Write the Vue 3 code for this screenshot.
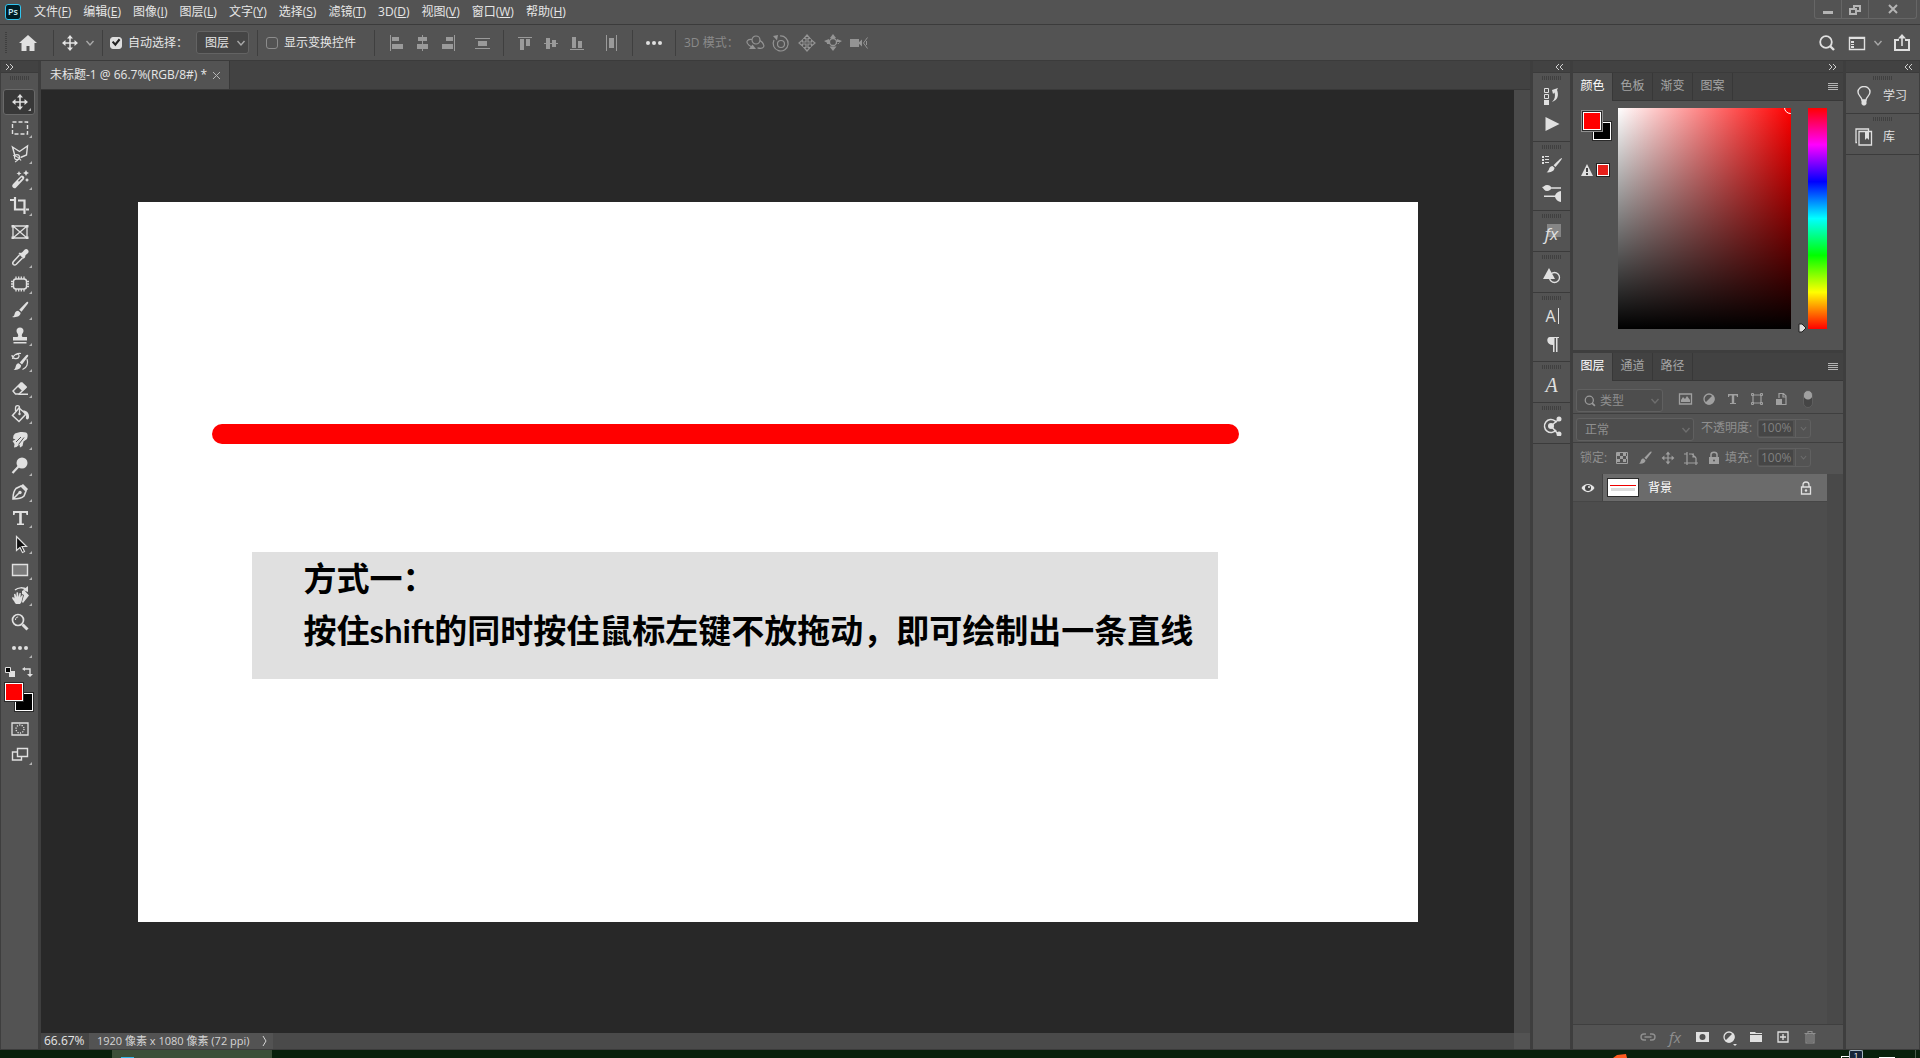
<script setup>
import { ref } from 'vue'

const menus = [
  ['文件', 'F'], ['编辑', 'E'], ['图像', 'I'], ['图层', 'L'], ['文字', 'Y'], ['选择', 'S'],
  ['滤镜', 'T'], ['3D', 'D'], ['视图', 'V'], ['窗口', 'W'], ['帮助', 'H'],
]

const S = 'fill="none" stroke="currentColor"'
const moveArrows = `<path ${S} stroke-width="1.5" d="M10 4v12M4 10h12"/><path d="M10 2l3 3.5H7zM10 18l3-3.5H7zM2 10l3.500-3v6zM18 10l-3.500-3v6z"/>`
const brushShape = '<path d="M18 2c.6.5.2 1.200-.2 1.800l-6.300 8-2.300-2 7-7.300c.6-.6 1.200-1 1.800-.5zM8.200 10.700l2.400 2.100c0 3.200-3.600 5-8.600 4.200 2.600-1 2.300-2.400 3-4.200.6-1.400 1.900-2.200 3.200-2.100z"/>'

const icons = {
  home: '<path d="M10 2l9 8h-2.500v8h-5v-5h-3v5h-5v-8H1z"/>',
  move: moveArrows,
  alignL: `<path ${S} d="M4.500 2v16"/><path d="M6 4h7v4H6zM6 11h11v5H6z"/>`,
  alignC: `<path ${S} d="M10.500 2v16"/><path d="M6 4h9v4H6zM5 11h11v5H5z"/>`,
  alignR: `<path ${S} d="M16.500 2v16"/><path d="M8 4h7v4H8zM4 11h11v5H4z"/>`,
  distV: `<path ${S} d="M3 5.500h15M3 15.500h15"/><path d="M6 8h9v5H6z"/>`,
  alignT: `<path ${S} d="M3 4.500h14"/><path d="M5 6h4v11H5zM11 6h4v7h-4z"/>`,
  alignM: `<path ${S} d="M3 10.500h14"/><path d="M5 5h4v11H5zM11 7h4v7h-4z"/>`,
  alignB: `<path ${S} d="M3 16.500h14"/><path d="M5 4h4v11H5zM11 8h4v7h-4z"/>`,
  distH: `<path ${S} d="M5.500 2v16M15.500 2v16"/><path d="M8 5h5v10H8z"/>`,
  dots: '<circle cx="4" cy="10" r="2"/><circle cx="10" cy="10" r="2"/><circle cx="16" cy="10" r="2"/>',
  orbit: `<circle cx="11" cy="7" r="4" ${S} stroke-width="1.200"/><path ${S} stroke-width="1.200" d="M7 6.500C3 6 1 8 2.500 10.500c1 1.500 2.500 2.500 4 3.200M15 7.500c3 2 4.500 4.500 3.500 6.500-1 1.500-3.500 1.500-6 .8"/><path d="M4 16l3.500-4.500L11 16z"/>`,
  roll: `<circle cx="10" cy="11" r="3.500" ${S} stroke-width="1.200"/><path ${S} stroke-width="1.200" d="M9 3a7.500 7.500 0 1 1-6 4"/><path d="M2 3l5-1-1 5.500z"/>`,
  pan3d: `<path ${S} stroke-width="1.200" d="M10 2l3 3.500h-2V9h3.500V7l3.500 3-3.500 3v-2H11v3.500h2L10 18l-3-3.500h2V11H5.500v2L2 10l3.500-3v2H9V5.500H7z"/>`,
  slide3d: `<circle cx="10" cy="9" r="3.500" ${S} stroke-width="1.300"/><path d="M10 1l3 4H7zM10 18l3.500-4.500h-7zM1 8l5-2v5zM19 8l-5-2v5zM4 9h3v2H4zM13 9h3v2h-3z"/>`,
  cam3d: `<path d="M1 6h9v8H1zM9 10l4-3.500v7z"/><path ${S} d="M18.500 4.500L14.500 10l4 5.500M17.500 8v4"/>`,
  search: `<circle cx="9" cy="9" r="5.800" ${S} stroke-width="1.800"/><path ${S} stroke-width="2.400" d="M13 13l4 4"/>`,
  layout: `<path ${S} stroke-width="1.400" d="M2.500 4.500h15v12h-15z"/><path d="M2 4h16v2H2zM4 8h3v2H4zM4 11h3v1H4zM4 13h3v2H4z"/>`,
  share: `<path ${S} stroke-width="2" d="M7 7H3v10h14V7h-4"/><path ${S} stroke-width="1.600" d="M10 13V4"/><path d="M10 1l4 4.500H6z"/>`,
  marquee: `<path ${S} stroke-width="1.400" stroke-dasharray="4 2" d="M2.500 4h15v12h-15z"/>`,
  lasso: `<path ${S} stroke-width="1.400" d="M5 12L2.500 3l7 4.500L17.500 2l-1 9-6 2.500"/><circle cx="7" cy="13.200" r="2.500" ${S} stroke-width="1.200"/><path ${S} stroke-width="1.200" d="M3 11.500c3 .5 6 2 8 5M8 15c-.5 1.500-1.500 2.500-3 3"/>`,
  wand: `<path ${S} stroke-width="4.600" stroke-linecap="round" d="M4.500 15.800L12 8"/><path stroke="#535353" stroke-width="1.300" d="M8.500 11.200L12 7.700"/><path d="M9 1l.8 1.700 1.700.8-1.700.8L9 6l-.8-1.700-1.700-.8 1.700-.8zM16 0l1 2 2 1-2 1-1 2-1-2-2-1 2-1zM17 8l.8 1.200L19 10l-1.200.8L17 12l-.8-1.200L15 10l1.200-.8z"/>`,
  crop: `<path ${S} stroke-width="2.200" d="M0 4h4M5 1v12.500h10M8 4.500h6.500V18M16 13.500h3"/>`,
  frame: `<path ${S} stroke-width="1.300" d="M3 4h14v12H3zM3 4l14 12M17 4L3 16"/><path d="M1.500 3h2.500v2.500H1.500zM16 3h2.500v2.500H16zM1.500 14.500h2.500V17H1.500zM16 14.500h2.500V17H16z"/>`,
  dropper: `<path d="M11 5l1.500-1 2-2.200c1-1 2.700-.9 3.500.2.900 1 .8 2.300-.2 3.200l-2.300 2L15 9.500l-1.500 1.200-5-5L9.700 4.500z"/><path ${S} stroke-width="1.500" d="M9.500 7L3.500 13.500c-1 1.200-.9 2.300-.2 3 .9.800 2 .7 3-.2L12.500 10"/>`,
  patch: `<rect x="3.500" y="5" width="13" height="10" rx="2.500" ${S} stroke-width="1.400"/><path ${S} stroke-width="1.300" d="M6 2.500V5M8.700 2.500V5M11.300 2.500V5M14 2.500V5M6 15v2.500M8.700 15v2.500M11.300 15v2.500M14 15v2.500M1 7.500h3M1 10h3M1 12.500h3M16 7.500h3M16 10h3M16 12.500h3"/>`,
  brush: brushShape,
  stamp: '<path d="M10 1.500c2.200 0 3.500 1.500 3.500 3.500 0 1.800-1.700 2.500-1.700 4.500 0 1.200.6 1.500 2 1.500H17v3.500H3V11h3.200c1.400 0 2-.3 2-1.500 0-2-1.700-2.700-1.700-4.500 0-2 1.300-3.500 3.500-3.500zM3.500 16h13v1.500h-13z"/>',
  history: `<path ${S} stroke-width="1.200" d="M2 3c0 4 6 5 7 1.500C9.500 2 7 1.500 6 3M2.500 7C3 3 7 1 11 1.500M17 7c1.500 4 0 9-4.500 10.500"/><path d="M18 3c.6.5.2 1.200-.2 1.800L12 12.500l-2.300-2 6.500-7.200c.6-.6 1.200-.8 1.800-.3zM8.700 11.200l2.400 2.100c0 3-2.600 5-7.600 4.500 2.100-1 1.800-2.500 2.500-4.300.6-1.500 1.500-2.300 2.700-2.300z"/>`,
  eraser: `<path ${S} stroke-width="1.400" d="M3 13L11 5l5 4.500-7 6.500H5.500z"/><path d="M7.500 8.500L12 4l5 4.800-4.500 4.500zM9 15.500h9V17H8z"/>`,
  bucket: `<path ${S} stroke-width="1.500" d="M9 4L2.500 11.500l6.500 6L16 10z"/><path ${S} stroke-width="1.300" d="M9.500 10V3.500C9.500 1 5.500 1 5.500 4v3"/><circle cx="9.500" cy="10" r="1.200"/><path d="M13 6.500c4 0 6 2.500 6 6.500 0 1.500-.7 2.500-1.700 2.500S15.500 14.500 16 13c.5-1.500 0-2-1-2z"/>`,
  smudge: '<path d="M5 3.500C8 2 13 1.500 16 2.500c2 .8 2 4 1 6.500l-3.500 2.500-1 4.500-2.500 1.500-.5-3-3 2.500-2.500.5.500-3.500L2.500 11l3-1.500L3 8.500l.5-3z"/><path d="M8.500 14.500l5.500-7M6 12l5-5" stroke="#535353"/>',
  dodge: `<circle cx="12" cy="7" r="5.500"/><path ${S} stroke-width="2.200" d="M8.500 10.500L2.500 17"/>`,
  pen: `<path ${S} stroke-width="1.600" d="M3 17c0-4 .5-8 3-10.500L11 4l5 5-2 5c-2.500 2.500-7 3-11 3zM3 17l6-6"/><circle cx="10" cy="10.500" r="1.700"/><path d="M11 3.500l2-1.500 5 5-1.500 2z"/>`,
  type: '<path d="M3 3h15v4h-1.500L16 5h-4.200v10.500H14V17H7v-1.500h2.200V5H5l-.5 2H3z"/>',
  select: '<path d="M6.500 2.500v14l3.500-3 2.500 5 2-1-2.500-5h4.500z" fill="#111" stroke="#e0e0e0" stroke-width="1.200"/>',
  rect: '<path d="M2.500 4.500h15v11h-15z" fill="#7b7b7b" stroke="#e0e0e0" stroke-width="1.400"/>',
  hand: `<path d="M5 17c-1-2.500-3-4-3-5.500 1-.5 2 .2 2.500 1L4 8l1.300-.3L6.500 11V6.500L8 6.300 8.500 11l1-4h1.300l-.3 4.500L12 9l1 .5-1 4c-.3 2-1 3.500-2 4.500H6z"/><path d="M12 5l2-1 5 5.500-6 7.500-1-1 2-7-2-1z"/><path ${S} stroke-width="1.500" d="M5 4c3-2.500 8-3 12-.5"/><path d="M18 0v6l-5-2z"/>`,
  zoom: `<circle cx="8" cy="8" r="5.500" ${S} stroke-width="1.700"/><path ${S} stroke-width="1" d="M5.500 8c0-2 1-3 2.700-3"/><path ${S} stroke-width="3" d="M12.500 12.500l5 5"/>`,
  mask: `<path ${S} stroke-width="1.300" d="M2 4h16v12H2z"/><circle cx="10" cy="10" r="4" ${S} stroke-width="1.300" stroke-dasharray="1.200 1.300"/>`,
  screen: `<path ${S} stroke-width="1.400" d="M7.500 3.500h10v8h-10zM7 7H2.500v8h9v-3"/>`,
  history2: `<path ${S} d="M2.500 2.500h4v4h-4zM2.500 8.500h4v4h-4z"/><path d="M2 14h5v5H2zM10 4l6-2-1 2c2 5 1 10-5 12 3-3 3.500-6 2.500-9.500L11 8z"/>`,
  play: '<path d="M3.500 3l14 7-14 7z"/>',
  brushes: '<path d="M0 1h2v2H0zM0 4h2v2H0zM0 7h2v2H0zM3 1h4v1H3zM3 4h4v1H3zM3 7h4v1H3z"/><path d="M20 3c.5.5-4 6.500-6.500 9l-2-1.800C14.500 7.500 19.300 2.400 20 3zM10.500 11l2 1.800c0 3-3 5-8 4.500 2-1 2-2.200 2.700-3.800.6-1.500 1.800-2.500 3.300-2.500z"/>',
  brushset: `<path d="M0 4c2 0 2.500-2 5-2s4 1.500 4 2.300h10v1.500H9C9 6.500 7.500 8 5 8S2 6 0 4zM2 12.500h11c1-2.500 3-4 6-4.500v11c-3-.5-5-2-6-5H2z"/>`,
  shapes: `<path d="M7 3l6 11H1z"/><circle cx="12.500" cy="12.500" r="5" ${S} stroke-width="1.300"/>`,
  para: `<path d="M8 3h9v1h-1.500v14H14V4h-1.500v14H11v-7C4 11 4 3 8 3z"/>`,
  nodes: `<circle cx="9" cy="10" r="6.500" ${S} stroke-width="1.500" stroke-dasharray="32 9" transform="rotate(38 9 10)"/><circle cx="9" cy="10" r="3"/><path ${S} stroke-width="1.500" d="M9 10l7-6M9 10l7 8"/><circle cx="17" cy="3" r="2.500"/><circle cx="17" cy="18" r="2.500"/>`,
  bulb: `<path ${S} stroke-width="1.400" d="M8 14c0-3-4-4-4-8 0-3.500 3-5.500 6-5.500S16 2.500 16 6c0 4-4 5-4 8z"/><path d="M7.500 14h5v4l-1.500 1.500H9L7.500 18z"/>`,
  library: `<path ${S} stroke-width="1.300" d="M5 4.500h12.500V18H5zM3 15.500H2V2h12.500v2"/><path d="M11 5h4v8l-2-2-2 2z"/>`,
  image: `<path ${S} stroke-width="1.300" d="M4.500 5h12v10h-12z"/><path d="M6 13v-2l2-3 2 2 2-3 3 4v2z"/>`,
  adjust: `<circle cx="10" cy="10" r="5" ${S} stroke-width="1.300"/><path d="M14 6A5.600 5.600 0 0 1 6 14z"/>`,
  tsmall: '<path d="M5 5h10v3h-1l-.5-1.500h-2.300V14H13v1H7v-1h1.800V6.500H6.500L6 8H5z"/>',
  transform: `<path ${S} stroke-width="1.200" d="M6 6h8v8H6z"/><path ${S} d="M4.500 4.500h2v2h-2zM13.500 4.500h2v2h-2zM4.500 13.500h2v2h-2zM13.500 13.500h2v2h-2z"/>`,
  smart: `<path ${S} stroke-width="1.200" d="M8 9V4.500h4.500L15 7v8.500h-4M12 5v3h3"/><path d="M5 10h6v6H5z"/>`,
  checker: `<path ${S} d="M4.500 4.500h11v11h-11z"/><path d="M5 5h3v3H5zM11 5h3v3h-3zM8 8h3v3H8zM5 11h3v3H5zM11 11h3v3h-3zM14 8h1v3h-1z"/>`,
  cropSmall: `<path ${S} stroke-width="1.200" d="M3 6h3M6 4v11h9M13 6H8M17 15h-2v2M11 6l4 4v5M6 15v2M12 6v3h3M3 15h3"/>`,
  lock: `<path d="M5 9h10v7H5z"/><path ${S} stroke-width="1.500" d="M7 9V6.500c0-3 6-3 6 0V9"/><circle cx="10" cy="12.500" r="1" fill="#535353"/>`,
  lockLine: `<path ${S} stroke-width="1.300" d="M5.500 9h9v7h-9zM7 9V7c0-4 6-4 6 0v2"/><circle cx="10" cy="12.500" r="1.200"/>`,
  eye: '<path d="M3.500 10c3-5.500 10-5.500 13 0-3 5.500-10 5.500-13 0z"/><circle cx="10" cy="10" r="3" fill="#444"/><circle cx="11" cy="9" r="1"/>',
  link: `<path ${S} stroke-width="1.400" d="M8 13H6c-4 0-4-6 0-6h2M12 7h2c4 0 4 6 0 6h-2M6.500 10h7"/>`,
  addMask: '<path fill-rule="evenodd" d="M4 5h13v10H4zM10.500 7a3 3 0 1 0 0 6 3 3 0 1 0 0-6z"/>',
  folder: '<path d="M4 5h5l1 1h6v1H4zM4 8h12v7H4z"/>',
  plus: `<path ${S} stroke-width="1.300" d="M5 5h10v10H5zM10 7v6M7 10h6"/>`,
  trash: `<path ${S} stroke-width="1.100" d="M6 7h8v9H6zM8 8v7M10 8v7M12 8v7M4.500 6.500h11M8 6V4.500h4V6"/>`,
  dropV: `<path ${S} stroke-width="1.400" d="M6.500 8l3.500 4 3.500-4"/>`,
}

const alignA = ['alignL', 'alignC', 'alignR']
const alignB = ['alignT', 'alignM', 'alignB']
const modes3d = ['orbit', 'roll', 'pan3d', 'slide3d', 'cam3d']
const tools = [
  'move', 'marquee', 'lasso', 'wand', 'crop', 'frame', 'dropper', 'patch', 'brush', 'stamp', 'history',
  'eraser', 'bucket', 'smudge', 'dodge', 'pen', 'type', 'select', 'rect', 'hand', 'zoom', 'dots',
]
const noFlyout = ['frame', 'zoom']
const dock = [['history2', 'play'], ['brushes', 'brushset'], ['fx'], ['shapes'], ['char', 'para'], ['glyph'], ['nodes']]
const filters = ['image', 'adjust', 'tsmall', 'transform', 'smart']
const locks = ['checker', 'brush', 'move', 'cropSmall', 'lock']

const activeTool = ref('move')
const autoSelect = ref(true)
const showTransform = ref(false)
</script>

<template>
  <div class="app">
    <header class="menubar">
      <span class="logo">Ps</span>
      <nav>
        <button v-for="[name, key] in menus" :key="name" type="button">{{ name }}(<u>{{ key }}</u>)</button>
      </nav>
      <div class="winctl">
        <button type="button" aria-label="最小化"><svg width="20" height="18"><path d="M5 11h10v3H5z" /></svg></button>
        <button type="button" aria-label="还原"><svg width="20" height="18"><path fill="none" stroke="currentColor" stroke-width="2" d="M9 10V6h6v5h-3M5 9h6v5H5z" /></svg></button>
        <button type="button" aria-label="关闭" class="close"><svg width="20" height="18"><path stroke="currentColor" stroke-width="2" d="M6 5l8 8M14 5l-8 8" /></svg></button>
      </div>
    </header>

    <div class="options">
      <div class="grip-v"></div>
      <button type="button" class="ib home" aria-label="主页"><svg viewBox="0 0 20 20" v-html="icons.home" /></button>
      <div class="grp movegrp">
        <svg class="ico" viewBox="0 0 20 20" v-html="icons.move" />
        <svg class="ico dim" viewBox="0 0 20 20" v-html="icons.dropV" />
      </div>
      <div class="grp autogrp">
        <label><input v-model="autoSelect" type="checkbox">自动选择：</label>
        <span class="pick target">
          <select aria-label="自动选择对象"><option>图层</option></select>
          <svg class="ico" viewBox="0 0 20 20" v-html="icons.dropV" />
        </span>
      </div>
      <div class="grp showgrp"><label><input v-model="showTransform" type="checkbox">显示变换控件</label></div>
      <div class="grp aligngrp">
        <button v-for="n in alignA" :key="n" type="button" class="ib" :aria-label="n"><svg viewBox="0 0 20 20" v-html="icons[n]" /></button>
        <button type="button" class="ib wide" aria-label="垂直分布"><svg viewBox="0 0 20 20" v-html="icons.distV" /></button>
      </div>
      <div class="grp aligngrp second">
        <button v-for="n in alignB" :key="n" type="button" class="ib" :aria-label="n"><svg viewBox="0 0 20 20" v-html="icons[n]" /></button>
        <button type="button" class="ib wide" aria-label="水平分布"><svg viewBox="0 0 20 20" v-html="icons.distH" /></button>
      </div>
      <div class="grp more"><button type="button" class="ib" aria-label="更多"><svg viewBox="0 0 20 20" v-html="icons.dots" /></button></div>
      <div class="grp mode3d">
        <span>3D 模式：</span>
        <button v-for="n in modes3d" :key="n" type="button" class="ib" :aria-label="n"><svg viewBox="0 0 20 20" v-html="icons[n]" /></button>
      </div>
      <div class="opt-right">
        <button type="button" class="ib" aria-label="搜索"><svg viewBox="0 0 20 20" v-html="icons.search" /></button>
        <button type="button" class="ib lay" aria-label="工作区"><svg viewBox="0 0 20 20" v-html="icons.layout" /></button>
        <svg class="ico dim" viewBox="0 0 20 20" v-html="icons.dropV" />
        <button type="button" class="ib" aria-label="共享"><svg viewBox="0 0 20 20" v-html="icons.share" /></button>
      </div>
    </div>

    <main class="workspace">
      <aside class="toolbox">
        <div class="head left"><svg width="9" height="6"><path d="M1 0l3 3-3 3M5 0l3 3-3 3" /></svg></div>
        <div class="grip tall"></div>
        <button
          v-for="t in tools" :key="t" type="button" class="tool"
          :class="{ on: t === activeTool, flyout: !noFlyout.includes(t) }" :aria-label="t" @click="activeTool = t"
        ><svg viewBox="0 0 20 20" v-html="icons[t]" /></button>
        <div class="mini">
          <svg width="10" height="10"><path d="M4 4h6v6H4z" fill="#e0e0e0" /><path d="M0.500 0.500h5v5h-5z" fill="#000" stroke="#e0e0e0" /></svg>
          <svg width="11" height="10"><path d="M3 2h5v5" fill="none" stroke="#e0e0e0" stroke-width="1.400" /><path d="M0 2l3-2v4zM8 10L5 7h6z" fill="#e0e0e0" /></svg>
        </div>
        <div class="fgbg">
          <button type="button" class="sw bg" aria-label="背景色"></button>
          <button type="button" class="sw fg" aria-label="前景色"></button>
        </div>
        <button type="button" class="tool" aria-label="快速蒙版"><svg viewBox="0 0 20 20" v-html="icons.mask" /></button>
        <button type="button" class="tool flyout" aria-label="屏幕模式"><svg viewBox="0 0 20 20" v-html="icons.screen" /></button>
      </aside>

      <section class="doc">
        <div class="doctabs">
          <div class="doctab">
            <span>未标题-1 @ 66.7%(RGB/8#) *</span>
            <button type="button" aria-label="关闭文档"><svg width="7" height="7"><path stroke="currentColor" d="M0 0l7 7M7 0L0 7" /></svg></button>
          </div>
        </div>
        <div class="view">
          <div class="stage">
            <div class="paper">
              <div class="stroke"></div>
              <div class="note">
                <p>方式一：</p>
                <p>按住shift的同时按住鼠标左键不放拖动，即可绘制出一条直线</p>
              </div>
            </div>
          </div>
          <div class="vscroll"></div>
        </div>
        <div class="status">
          <span class="pct">66.67%</span>
          <span class="info">1920 像素 x 1080 像素 (72 ppi)<svg width="6" height="10"><path d="M1 0l3 5-3 5" fill="none" stroke="currentColor" /></svg></span>
          <span class="corner"></span>
        </div>
      </section>

      <aside class="dock">
        <div class="head right"><svg width="9" height="6"><path d="M4 0L1 3l3 3M8 0L5 3l3 3" /></svg></div>
        <div v-for="(g, i) in dock" :key="i" class="dgroup">
          <div class="grip"></div>
          <button v-for="n in g" :key="n" type="button" :aria-label="n">
            <span v-if="n === 'fx'" class="fx">fx</span>
            <span v-else-if="n === 'char'" class="char">A</span>
            <span v-else-if="n === 'glyph'" class="glyph">A</span>
            <svg v-else viewBox="0 0 20 20" v-html="icons[n]" />
          </button>
        </div>
      </aside>

      <aside class="panels">
        <div class="head right"><svg width="9" height="6"><path d="M1 0l3 3-3 3M5 0l3 3-3 3" /></svg></div>
        <section class="colorpanel">
          <div class="tabs">
            <button type="button" class="on">颜色</button><button type="button">色板</button><button type="button">渐变</button><button type="button">图案</button>
            <i class="burger"></i>
          </div>
          <div class="colorbody">
            <div class="chips">
              <div class="fgbg">
                <button type="button" class="sw bg" aria-label="背景色"></button>
                <button type="button" class="sw fg" aria-label="前景色"></button>
              </div>
              <div class="gamut">
                <svg width="12" height="12"><path d="M6 0l6 12H0z" fill="#e0e0e0" /><path d="M5 4h2v4H5zM5 9h2v2H5z" fill="#444" /></svg>
                <button type="button" class="safe" aria-label="色域内颜色"></button>
              </div>
            </div>
            <div class="field"><i class="ring"></i></div>
            <div class="hue"><svg width="9" height="10"><path d="M1 1h3l4 4-4 4H1z" fill="#e0e0e0" stroke="#222" /></svg></div>
          </div>
        </section>

        <section class="layers">
          <div class="tabs">
            <button type="button" class="on">图层</button><button type="button">通道</button><button type="button">路径</button>
            <i class="burger"></i>
          </div>
          <div class="lrow filter">
            <span class="pick kind">
              <svg class="ico mag" viewBox="0 0 20 20" v-html="icons.search" />
              <select aria-label="图层过滤"><option>类型</option></select>
              <svg class="ico" viewBox="0 0 20 20" v-html="icons.dropV" />
            </span>
            <div class="set">
              <svg v-for="n in filters" :key="n" class="ico" viewBox="0 0 20 20" v-html="icons[n]" />
            </div>
            <i class="toggle"></i>
          </div>
          <div class="lrow blend">
            <span class="pick mode">
              <select aria-label="混合模式"><option>正常</option></select>
              <svg class="ico" viewBox="0 0 20 20" v-html="icons.dropV" />
            </span>
            <label class="num">不透明度:<span class="box"><input type="text" value="100%"><svg class="ico" viewBox="0 0 20 20" v-html="icons.dropV" /></span></label>
          </div>
          <div class="lrow lockrow">
            <span>锁定:</span>
            <div class="set">
              <svg v-for="n in locks" :key="n" class="ico" :class="n" viewBox="0 0 20 20" v-html="icons[n]" />
            </div>
            <label class="num">填充:<span class="box"><input type="text" value="100%"><svg class="ico" viewBox="0 0 20 20" v-html="icons.dropV" /></span></label>
          </div>
          <div class="list">
            <div class="rows">
              <div class="layer">
                <button type="button" class="vis" aria-label="可见性"><svg viewBox="0 0 20 20" v-html="icons.eye" /></button>
                <div class="item">
                  <span class="thumb"><i></i><b></b></span>
                  <span class="lname">背景</span>
                  <svg class="ico" viewBox="0 0 20 20" v-html="icons.lockLine" />
                </div>
              </div>
            </div>
            <div class="lscroll"></div>
          </div>
          <div class="foot">
            <button type="button" class="off" aria-label="链接图层"><svg viewBox="0 0 20 20" v-html="icons.link" /></button>
            <button type="button" class="off fxs" aria-label="图层样式">fx</button>
            <button type="button" aria-label="添加蒙版"><svg viewBox="0 0 20 20" v-html="icons.addMask" /></button>
            <button type="button" class="more-mark" aria-label="调整图层"><svg viewBox="0 0 20 20" v-html="icons.adjust" /></button>
            <button type="button" aria-label="新建组"><svg viewBox="0 0 20 20" v-html="icons.folder" /></button>
            <button type="button" aria-label="新建图层"><svg viewBox="0 0 20 20" v-html="icons.plus" /></button>
            <button type="button" class="off" aria-label="删除图层"><svg viewBox="0 0 20 20" v-html="icons.trash" /></button>
          </div>
        </section>
      </aside>

      <aside class="learn">
        <div class="head right"><svg width="9" height="6"><path d="M4 0L1 3l3 3M8 0L5 3l3 3" /></svg></div>
        <div class="dgroup"><div class="grip"></div><button type="button"><svg viewBox="0 0 20 20" v-html="icons.bulb" />学习</button></div>
        <div class="dgroup"><div class="grip"></div><button type="button"><svg viewBox="0 0 20 20" v-html="icons.library" />库</button></div>
      </aside>
    </main>

    <footer class="taskbar">
      <div class="running"><i></i></div>
      <div class="tray">
        <svg class="flame" width="14" height="4"><path d="M0 4l4-3 9-1 1 4z" fill="#ff5a1f" /></svg>
        <svg width="8" height="2"><path d="M0 0h8v1H1v1H0z" fill="#fff" /></svg>
        <span class="badge">1</span>
        <i class="ime"></i>
        <i class="peek"></i>
      </div>
    </footer>
  </div>
</template>

<style>
html,
body {
  margin: 0;
  background: #3b3b3b;
}
</style>

<style scoped>
* {
  box-sizing: border-box;
}
.app {
  display: flex;
  flex-direction: column;
  height: 100vh;
  overflow: hidden;
  background: #535353;
  color: #e6e6e6;
  font: 12px/16px "Open Sans", "Noto Sans CJK SC", sans-serif;
}
button,
input,
select {
  margin: 0;
  padding: 0;
  border: 0;
  background: none;
  color: inherit;
  font: inherit;
  appearance: none;
}
svg {
  display: block;
  fill: currentColor;
  flex: none;
}
p {
  margin: 0;
}
.ico {
  width: 20px;
  height: 20px;
}
.dim {
  color: #a8a8a8;
}

/* menu bar */
.menubar {
  display: flex;
  align-items: center;
  height: 25px;
  flex: none;
  border-bottom: 1px solid #3b3b3b;
}
.logo {
  width: 16px;
  height: 16px;
  margin: 0 13px 0 5px;
  border: 1px solid #31c5f0;
  border-radius: 3px;
  background: #001d26;
  color: #c8ecf7;
  font-size: 9px;
  font-weight: 600;
  line-height: 14px;
  text-align: center;
}
.menubar nav {
  display: flex;
  gap: 12px;
  flex: 1;
}
.menubar nav button {
  white-space: nowrap;
}
.winctl {
  display: flex;
  align-self: flex-start;
  margin-right: 3px;
  border: 1px solid #666;
  border-top: 0;
  border-radius: 0 0 3px 3px;
  color: #b4b4b4;
}
.winctl button {
  display: flex;
  justify-content: center;
  width: 27px;
  height: 18px;
  border-right: 1px solid #666;
}
.winctl .close {
  width: 47px;
  border-right: 0;
}

/* options bar */
.options {
  display: flex;
  align-items: center;
  height: 36px;
  flex: none;
  border-bottom: 1px solid #3b3b3b;
}
.grip-v {
  width: 2px;
  height: 22px;
  margin: 0 11px 0 5px;
  background: repeating-linear-gradient(#3f3f3f 0 1px, transparent 1px 2px);
}
.ib {
  display: block;
  width: 20px;
  height: 20px;
  color: #e0e0e0;
}
.ib svg {
  width: 20px;
  height: 20px;
}
.home {
  margin-right: 15px;
}
.grp {
  display: flex;
  align-items: center;
  height: 26px;
  flex: none;
  border-left: 1px solid #3f3f3f;
  white-space: nowrap;
}
.movegrp {
  width: 49px;
  padding-left: 6px;
}
.autogrp {
  width: 155px;
  padding-left: 7px;
  justify-content: space-between;
  padding-right: 8px;
}
label {
  display: flex;
  align-items: center;
}
input[type="checkbox"] {
  width: 12px;
  height: 12px;
  margin-right: 6px;
  border: 1px solid #8c8c8c;
  border-radius: 3px;
}
input[type="checkbox"]:checked {
  border-color: #dedede;
  background: #dedede;
}
input[type="checkbox"]:checked::after {
  content: "";
  display: block;
  width: 10px;
  height: 10px;
  background: #222;
  clip-path: polygon(8% 48%, 24% 34%, 42% 56%, 78% 10%, 94% 24%, 44% 88%);
}
.pick {
  position: relative;
  display: block;
  flex: none;
  border: 1px solid #636363;
  border-radius: 3px;
  background: #454545;
}
.pick select {
  display: block;
  width: 100%;
  height: 21px;
  padding-left: 8px;
}
.pick .ico {
  position: absolute;
  right: -3px;
  top: 1px;
  color: #a8a8a8;
  pointer-events: none;
}
.target {
  width: 53px;
}
.showgrp {
  width: 117px;
  padding-left: 8px;
}
.aligngrp {
  width: 129px;
  padding-left: 11px;
  gap: 6px;
}
.aligngrp .ib,
.mode3d {
  color: #9a9a9a;
}
.aligngrp .wide {
  margin-left: 8px;
}
.more {
  width: 43px;
  padding-left: 11px;
}
.mode3d {
  gap: 6px;
  padding-left: 8px;
}
.mode3d span {
  width: 55px;
  color: #8a8a8a;
}
.mode3d .ib {
  color: #949494;
}
.opt-right {
  display: flex;
  align-items: center;
  margin-left: auto;
  padding-right: 8px;
}
.lay {
  margin-left: 10px;
}
.opt-right .dim {
  margin: 0 4px 0 1px;
}

/* workspace */
.workspace {
  display: flex;
  flex: 1;
  gap: 3px;
  min-height: 0;
  padding: 0 1px;
  border-bottom: 1px solid #3b3b3b;
  background: #3e3e3e;
}
.head {
  display: flex;
  align-items: center;
  height: 12px;
  flex: none;
  border-bottom: 1px solid #3b3b3b;
  background: #424242;
}
.head.left {
  padding-left: 4px;
}
.head.right {
  justify-content: flex-end;
  padding-right: 6px;
}
.head svg {
  fill: none;
  stroke: #d0d0d0;
}
.grip {
  width: 20px;
  height: 4px;
  margin: 3px auto 2px;
  background: repeating-linear-gradient(90deg, #404040 0 1px, transparent 1px 2px);
}
.grip.tall {
  margin: 3px auto 9px;
}

.toolbox {
  display: flex;
  flex-direction: column;
  width: 37px;
  flex: none;
  background: #535353;
}
.tool {
  position: relative;
  display: flex;
  align-items: center;
  justify-content: center;
  width: 32px;
  height: 26px;
  margin-left: 2px;
  padding-left: 2px;
  flex: none;
  color: #e0e0e0;
}
.tool svg {
  width: 20px;
  height: 20px;
}
.tool.on {
  border: 1px solid #696969;
  border-radius: 3px;
  background: #383838;
}
.tool.flyout::after {
  content: "";
  position: absolute;
  right: 3px;
  bottom: 3px;
  width: 3px;
  height: 3px;
  background: #b5b5b5;
  clip-path: polygon(100% 0, 100% 100%, 0 100%);
}
.mini {
  display: flex;
  gap: 7px;
  height: 21px;
  padding: 6px 0 0 4px;
  flex: none;
}
.fgbg {
  position: relative;
  width: 30px;
  height: 30px;
  margin: 0 0 4px 3px;
  flex: none;
}
.sw {
  position: absolute;
  width: 20px;
  height: 20px;
  border: 1px solid #2a2a2a;
  box-shadow: inset 0 0 0 1px #fff;
}
.sw.fg {
  left: 0;
  top: 0;
  background: #f00;
}
.sw.bg {
  right: 0;
  bottom: 0;
  background: #000;
}

/* document */
.doc {
  display: flex;
  flex: 1;
  flex-direction: column;
  min-width: 0;
}
.doctabs {
  display: flex;
  height: 29px;
  flex: none;
  border-bottom: 1px solid #383838;
  background: #424242;
}
.doctab {
  display: flex;
  align-items: center;
  gap: 6px;
  padding: 0 9px;
  border-right: 1px solid #383838;
  background: #535353;
  white-space: nowrap;
}
.doctab button {
  color: #b5b5b5;
}
.view {
  display: flex;
  flex: 1;
  min-height: 0;
}
.stage {
  display: flex;
  flex: 1;
  align-items: center;
  justify-content: center;
  min-width: 0;
  overflow: hidden;
  background: #282828;
}
.vscroll {
  width: 16px;
  background: #4a4a4a;
}
.paper {
  position: relative;
  width: 1280px;
  height: 720px;
  flex: none;
  background: #fff;
}
.stroke {
  position: absolute;
  left: 74px;
  top: 222px;
  width: 1027px;
  height: 20px;
  border-radius: 10px;
  background: #f00;
}
.note {
  position: absolute;
  left: 114px;
  top: 350px;
  width: 966px;
  height: 127px;
  padding-left: 52px;
  background: #e0e0e0;
  color: #000;
  font: 700 33px/52px Lato, "Noto Sans CJK SC", sans-serif;
  white-space: nowrap;
}
.status {
  display: flex;
  height: 16px;
  flex: none;
  background: #4a4a4a;
  white-space: nowrap;
}
.pct {
  width: 48px;
  padding-left: 3px;
  background: #454545;
}
.info {
  display: flex;
  align-items: center;
  justify-content: space-between;
  width: 184px;
  padding: 0 5px 0 8px;
  background: #535353;
  color: #d5d5d5;
  font-size: 11px;
}
.corner {
  width: 16px;
  margin-left: auto;
  background: #535353;
}

/* icon dock */
.dock {
  width: 37px;
  flex: none;
  background: #535353;
}
.dgroup {
  display: flow-root;
  padding-bottom: 3px;
  border-bottom: 1px solid #3b3b3b;
}
.dgroup button {
  display: flex;
  align-items: center;
  justify-content: center;
  width: 100%;
  height: 28px;
  color: #e0e0e0;
}
.dgroup button svg {
  width: 20px;
  height: 20px;
}
.fx {
  width: 18px;
  background: linear-gradient(#858585, #858585) right top / 14px 13px no-repeat;
  font: italic 17px/20px "Open Sans", sans-serif;
}
.char {
  padding: 0 2px 0 1px;
  border-right: 1px solid #e0e0e0;
  font: 16px/16px "Open Sans", sans-serif;
}
.glyph {
  font: italic 20px/20px "Liberation Serif", serif;
}

/* panels */
.panels {
  display: flex;
  flex-direction: column;
  width: 270px;
  flex: none;
  background: #3e3e3e;
}
.colorpanel {
  height: 277px;
  flex: none;
  margin-bottom: 3px;
  background: #535353;
}
.tabs {
  display: flex;
  height: 28px;
  flex: none;
  border-bottom: 1px solid #383838;
  background: #424242;
}
.tabs button {
  width: 40px;
  height: 27px;
  padding-bottom: 2px;
  border-right: 1px solid #383838;
  color: #a5a5a5;
}
.tabs .on {
  height: 28px;
  background: #535353;
  color: #fff;
}
.burger {
  width: 10px;
  height: 7px;
  margin: 10px 5px 0 auto;
  background: repeating-linear-gradient(#b5b5b5 0 1px, transparent 1px 2px);
}
.colorbody {
  display: flex;
  padding: 7px 16px 0 8px;
}
.chips {
  width: 37px;
}
.chips .fgbg {
  margin: 3px 0 0 1px;
}
.chips .fg {
  outline: 1px solid #909090;
}
.gamut {
  display: flex;
  align-items: center;
  gap: 3px;
  margin-top: 22px;
}
.safe {
  width: 14px;
  height: 14px;
  border: 1px solid #222;
  background: #e8201b;
  box-shadow: inset 0 0 0 1px #fff;
}
.field {
  position: relative;
  width: 173px;
  height: 221px;
  overflow: hidden;
  background: linear-gradient(to top, #000, transparent), linear-gradient(to right, #fff, #f00);
}
.ring {
  position: absolute;
  right: -6px;
  top: -7px;
  width: 13px;
  height: 13px;
  border: 1px solid #fff;
  border-radius: 50%;
}
.hue {
  position: relative;
  width: 19px;
  margin-left: auto;
  background: linear-gradient(#f00, #f0f, #00f, #0ff, #0f0, #ff0, #f00);
}
.hue svg {
  position: absolute;
  left: -10px;
  bottom: -4px;
}
.layers {
  display: flex;
  flex: 1;
  flex-direction: column;
  min-height: 0;
  background: #535353;
}
.lrow {
  display: flex;
  align-items: center;
  flex: none;
  padding-left: 3px;
  border-bottom: 1px solid #3f3f3f;
  color: #8f8f8f;
  white-space: nowrap;
}
.lrow .pick {
  border-color: #606060;
  background: #4d4d4d;
}
.lrow .pick .ico:last-child,
.box .ico {
  color: #6e6e6e;
}
.filter {
  height: 33px;
  padding-top: 7px;
}
.kind {
  width: 87px;
}
.kind select {
  padding-left: 23px;
}
.kind .mag {
  right: auto;
  left: 6px;
  width: 14px;
  height: 14px;
  top: 4px;
  color: #9a9a9a;
}
.set {
  display: flex;
  color: #a0a0a0;
}
.filter .set {
  gap: 4px;
  margin: 0 12px 4px 12px;
}
.toggle {
  width: 10px;
  height: 18px;
  margin-bottom: 4px;
  border: 1px solid #5e5e5e;
  border-radius: 5px;
  background: radial-gradient(circle at 4px 4px, #a0a0a0 0 4px, #454545 5px);
}
.blend {
  height: 29px;
  padding-top: 3px;
}
.mode {
  width: 118px;
}
.num {
  justify-content: space-between;
}
.blend .num {
  width: 110px;
  margin: 0 0 3px 7px;
}
.box {
  display: flex;
  width: 54px;
  height: 19px;
  border: 1px solid #606060;
  border-radius: 3px;
  align-items: center;
  overflow: hidden;
}
.box input {
  width: 34px;
  height: 15px;
  margin: 0 3px 0 1px;
  padding-left: 2px;
  background: #464646;
  color: #808080;
  flex: none;
}
.box .ico {
  margin-left: -1px;
  width: 16px;
  height: 17px;
  border-left: 1px solid #606060;
}
.lockrow {
  height: 31px;
  padding: 0 0 2px 7px;
  border-bottom: 0;
}
.lockrow > span {
  width: 32px;
}
.lockrow .set {
  gap: 3px;
}
.lockrow .brush,
.lockrow .move {
  padding: 2px;
}
.lockrow .num {
  width: 86px;
  margin-left: 1px;
}
.list {
  display: flex;
  flex: 1;
  min-height: 0;
  background: #4d4d4d;
}
.rows {
  flex: 1;
}
.lscroll {
  width: 16px;
  background: #494949;
}
.layer {
  display: flex;
  height: 28px;
  border-bottom: 1px solid #464646;
  background: #535353;
}
.vis {
  width: 30px;
  padding-left: 5px;
  border-right: 1px solid #444;
}
.vis svg {
  width: 20px;
  height: 20px;
}
.item {
  display: flex;
  flex: 1;
  align-items: center;
  padding: 0 11px 0 4px;
  background: #6b6b6b;
  color: #fff;
}
.item .ico {
  margin-left: auto;
  color: #e0e0e0;
}
.thumb {
  display: flex;
  flex-direction: column;
  gap: 2px;
  width: 32px;
  height: 19px;
  margin-right: 9px;
  padding: 6px 2px 0;
  border: 1px solid #2b2b2b;
  background: #fff;
}
.thumb i {
  height: 1px;
  background: #e00;
}
.thumb b {
  height: 3px;
  margin: 0 1px;
  background: #ddd;
}
.foot {
  display: flex;
  align-items: center;
  justify-content: flex-end;
  gap: 7px;
  height: 25px;
  padding-right: 23px;
  flex: none;
  border-top: 1px solid #3f3f3f;
}
.foot button {
  position: relative;
  width: 20px;
  height: 20px;
  color: #e0e0e0;
}
.foot button svg {
  width: 20px;
  height: 20px;
}
.foot .off {
  color: #8f8f8f;
}
.foot .fxs {
  font: italic 15px/20px "Open Sans", sans-serif;
}
.foot .more-mark::after {
  content: "";
  position: absolute;
  right: 2px;
  bottom: 1px;
  width: 4px;
  height: 2px;
  background: #e0e0e0;
  clip-path: polygon(0 0, 100% 0, 50% 100%);
}

.learn {
  width: 73px;
  flex: none;
  background: #535353;
}
.learn button {
  justify-content: flex-start;
  gap: 9px;
  padding-left: 8px;
}

/* sliver of the system taskbar */
.taskbar {
  display: flex;
  height: 8px;
  flex: none;
  justify-content: space-between;
  overflow: hidden;
  background: #08210c;
}
.running {
  display: flex;
  align-items: flex-end;
  width: 160px;
  margin-left: 112px;
  padding-left: 9px;
  background: #3b4f38;
}
.running i {
  width: 13px;
  height: 1px;
  background: #31b5e8;
}
.tray {
  display: flex;
  align-items: flex-end;
}
.flame {
  margin-right: 214px;
}
.badge {
  width: 14px;
  height: 8px;
  margin-right: 16px;
  border: 1px solid #a9b8c4;
  border-bottom: 0;
  border-radius: 2px 2px 0 0;
  background: #17263a;
  color: #fff;
  font-size: 8px;
  line-height: 7px;
  text-align: center;
}
.ime {
  width: 16px;
  height: 1px;
  margin-right: 20px;
  background: #fff;
}
.peek {
  width: 5px;
  height: 8px;
  border-left: 1px solid #4b5d4d;
}
</style>
